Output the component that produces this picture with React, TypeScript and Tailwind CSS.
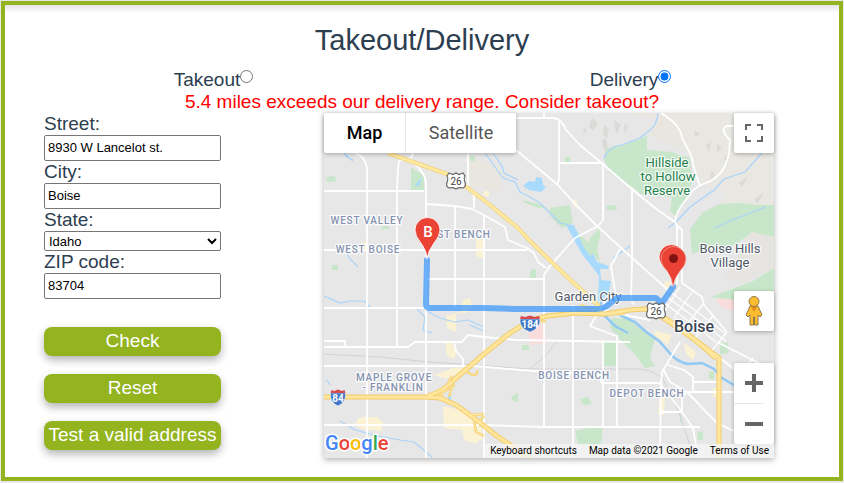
import { useState } from "react";

const font = "font-['Liberation_Sans',Arial,sans-serif]";
const roboto = "font-[Roboto,sans-serif]";

const minorRoads = [
  "M355 153 Q367 158 367 170 V458",
  "M324 191 H424",
  "M413 153 L411 158 L399 161 L398 168 L397 191 V346",
  "M410 160 Q426 172 426 184 V458",
  "M426 204 L455 206 L472 209 L484 215 L505 227 L508 240 L527 248 L534 253 L538 262 L546 268",
  "M455 206 V308",
  "M468 153 V187 L474 195 V208",
  "M484 215 V458",
  "M324 250 H527",
  "M427 279 H544",
  "M324 308 H430",
  "M324 341 H345 V347 H324",
  "M345 347 H408 L415 342 H462 L468 335 L484 337 L516 340 L630 342",
  "M324 366 H474 L520 370 L598 375 L602 383 H660 L662 382",
  "M454 342 L456 351 L463 359 V366",
  "M324 425 H484 L545 427 H700",
  "M544 427 V275 L550 266 L575 238 L598 226",
  "M573 305 V458",
  "M603 340 V427",
  "M617 335 V427",
  "M516 118 H553 Q561 118 566 130 L580 145 L604 165 L632 189 L655 208 L675 222 L677 226 V284",
  "M544 113 V118",
  "M559 120 V180 L557 185",
  "M559 163 H603",
  "M603 163 V220 L598 226",
  "M516 150 L557 184 L575 204 L597 226 L630 256 L668 290",
  "M677 225 L682 230 V283 L702 297 L704 305 L727 332",
  "M661 113 Q681 125 682 138 L691 155 L696 175 L700 186",
  "M675 222 Q676 210 689 196 Q692 189 703 184 Q718 180 725 166 L729 154 L730 140 Q719 129 727 126 H734",
  "M632 190 V265 L631 300 L634 304",
  "M611 266 L614 285 L617 300 M611 266 L620 249",
  "M600 310 L650 320 M606 300 L590 326 L616 336",
  "M680 342 L662 372 L661 383 L660 458",
  "M668 365 L684 370 L693 377 V392 M693 382 H718",
  "M687 392 H734",
  "M663 369 L670 382 L687 392 L717 423 L734 431",
  "M660 384 L680 409 L693 428 L698 458",
  "M660 412 H682 V397 L687 392",
  "M717 342 L753 360 L774 372",
  "M720 358 L734 369 M749 363 L753 358",
];

const downtown = [
  "M668 290 L725 333",
  "M666 296 L726 341",
  "M662 301 L716 342",
  "M680 287 L665 310",
  "M692 292 L674 318",
  "M703 304 L684 328",
  "M713 316 L694 339",
  "M727 332 L710 353",
];

const usHighways = ["M388 153 L410 161 L447 174 L460 182 L490 205 L518 228 L530 241 L565 275 L600 307"];
const freeways = [
  "M324 397 H425 L440 398 L456 405 L474 418 L497 436 L530 459",
  "M428 396 Q446 390 455 379 L470 366 L490 349 L510 333 Q530 319 548 316 L575 313 L605 314 L630 310 L644 309 L656 312 L668 320 L700 344 L716 358",
  "M660 316 L690 336 L719 358 V458",
];
const ramps = [
  "M435 397 L455 385 M440 398 L452 376 M464 370 Q478 380 477 370 M449 397 L452 386",
  "M470 415 L484 414 M474 420 L476 432 L484 436 M478 423 L484 416",
  "M580 305 L606 314 L625 314 M520 323 L546 321",
];

const greens = [
  "M620 146 L634 141 L647 136 V150 L672 152 L690 158 L692 181 L686 200 L675 216 L670 211 L672 197 L640 194 L634 188 L620 180 L610 172 L604 160 L606 149 L616 145 Z",
  "M690 229 L703 212 L720 204 L740 203 L758 205 L774 205 V237 L752 232 L735 245 L706 249 L692 254 Z",
  "M711 297 L753 281 L774 268 V300 L745 301 Z",
  "M411 167 L424 176 V190 H411 Z",
  "M326 177 L335 176 L336 181 L327 182 Z",
  "M332 265 H338 V270 H332 Z",
  "M382 226 H389 V229 H382 Z",
  "M470 156 H475 V161 H470 Z",
  "M565 157 H570 V162 H565 Z",
  "M606 206 L616 205 L617 210 L607 210 Z",
  "M550 208 L570 205 L573 223 L562 228 L550 216 Z",
  "M513 184 L523 200 L538 204 L548 209 L535 207 L524 202 Z",
  "M590 238 L600 228 L600 236 L597 250 L600 262 L586 248 Z",
  "M530 270 L536 269 V278 H530 Z",
  "M612 318 L630 319 L640 329 L655 338 L650 358 L655 366 L645 368 L635 354 L622 342 L610 327 Z",
  "M603 342 H616 V366 H603 Z",
  "M511 397 L518 393 V402 L513 401 Z",
  "M580 399 L588 397 L592 404 L584 405 Z",
  "M575 431 L588 428 L602 428 L602 440 L600 444 H578 Z",
  "M709 372 L714 371 V379 H709 Z",
  "M698 431 L703 432 V440 H697 Z",
  "M680 412 L682 418 L680 424 Z",
  "M720 343 L728 343 L729 353 L720 354 Z",
  "M522 345 H529 V350 H522 Z",
];

const yellows = [
  "M463 300 L470 298 L472 305 L468 312 L456 314 V332 L447 328 L446 316 L460 312 Z",
  "M476 238 L485 240 L483 259 L476 256 Z",
  "M434 375 L456 367 L467 369 L455 375 L446 379 Z",
  "M445 342 H451 L456 352 L454 359 L447 356 Z",
  "M358 418 L365 417 L378 417 L384 424 L381 431 L362 429 L355 425 Z",
  "M443 406 L468 412 L478 420 V444 L464 440 L462 430 L444 428 Z",
  "M470 427 H482 V440 L470 442 Z",
  "M484 190 L489 192 V197 L483 196 Z",
  "M572 199 L577 201 L578 208 L574 206 Z",
  "M361 243 L367 242 V250 L361 251 Z",
  "M660 395 L665 395 L664 415 L658 414 Z",
  "M684 343 L696 352 L693 360 L686 354 Z",
  "M655 331 L672 335 L668 345 L655 336 Z",
  "M713 388 H722 V397 H713 Z",
  "M665 281 L672 282 L668 290 L664 287 Z",
];

const streams = [
  "M485 153 L495 167 L503 178 L515 182 L520 192 L530 197 L540 203 L552 215 L560 223 L575 226",
  "M493 153 L502 166 L504 173 L518 180",
  "M344 153 L349 158 L353 161 M345 156 L353 160",
  "M604 158 Q608 147 622 145 L640 138 L650 130 Q657 125 658 113",
  "M762 153 L745 172 L724 179 L714 190 L690 207 L676 222 L668 228",
  "M715 228 L730 221 L745 215 L755 211 L766 207",
  "M339 245 L345 250 L350 259 L358 267",
  "M324 296 L340 303 L350 301 L364 301 L370 307",
  "M417 309 L425 317 L423 330 L432 333 M425 310 L440 318 L454 322 L468 320 L484 327",
  "M340 421 L355 430 L378 436 L400 440 L414 442 L432 457",
  "M327 380 L330 385",
  "M470 325 L486 332",
  "M613 258 L630 246",
];

const Shield = ({ x, y }: { x: number; y: number }) => (
  <g transform={`translate(${x} ${y})`}>
    <path
      d="M-7 -8 L-3 -6.500 L0 -8 L3 -6.500 L7 -8 L9 -5 Q7.500 -3 8.500 0 Q11 5 7 7 Q3 6 0 8 Q-3 6 -7 7 Q-11 5 -8.500 0 Q-7.500 -3 -9 -5 Z"
      fill="#fff"
      stroke="#666"
      strokeWidth="1.2"
    />
    <text y="3.500" fontSize="10" textAnchor="middle" fill="#444">26</text>
  </g>
);

const Interstate = ({ x, y, n, w }: { x: number; y: number; n: string; w: number }) => (
  <g transform={`translate(${x} ${y})`}>
    <path d={`M${-w} -4 H${w} Q${w + 1} 5 0 9 Q${-w - 1} 5 ${-w} -4 Z`} fill="#3e76c6" stroke="#fff" strokeWidth="0.5" />
    <path d={`M${-w} -4 L${-w + 1} -7 L${-w / 2} -6 L0 -7.500 L${w / 2} -6 L${w - 1} -7 L${w} -4 Z`} fill="#d8494b" />
    <text y="4.500" fontSize="10" fontWeight="700" textAnchor="middle" fill="#fff">{n}</text>
  </g>
);

function MapDrawing() {
  return (
    <svg className={`block h-full w-full ${roboto}`} viewBox="324 113 450 345" preserveAspectRatio="xMidYMid slice" role="img" aria-label="Map of Boise">
      <rect x="0" y="0" width="1200" height="800" fill="#e7e7e7" />
      <path d="M661 113 H774 V206 L740 203 L720 205 L725 190 L703 184 L696 175 L684 140 Z" fill="#e9e7e1" />
      <path d="M620 113 H661 L680 132 L684 150 L650 135 L657 118 Z M475 158 L500 170 L501 190 L470 187 V165 Z" fill="#e9e6df" />
      <path d="M742 213 L774 206 V268 L740 284 L725 275 L745 245 Z" fill="#e5e4e1" />
      <g fill="#d9d8d4" opacity="0.8">
        <path d="M592 118 l6 5 -5 8 -4 -5z M604 125 l5 4 -2 9 -4 -3z M614 120 l7 5 -5 9z M602 140 l4 -2 2 10 -4 3z M624 124 l4 2 -3 8z M584 128 l3 2 -4 4z" />
        <path d="M706 145 l5 -3 -2 11z M717 144 l5 5 -5 3z M711 171 l4 3 -5 9z M724 158 l4 -4 -2 8z M739 183 l9 -7 -6 11z M754 200 l10 -8 -6 11z M694 130 l6 4 -5 3z" />
      </g>
      <path d="M528 328 L543 324 L544 334 L548 343 L530 345 Z M716 300 L733 292 L734 311 L722 307 Z" fill="#f9dcdc" />
      {greens.map((d) => <path key={d} d={d} fill="#c8e6ca" />)}
      {yellows.map((d) => <path key={d} d={d} fill="#fbf1d3" />)}
      <g fill="none" stroke="#d2d2d6" strokeWidth="1">
        <path d="M324 354 L380 357 L430 362 L530 369 H640 Q655 371 663 379 L678 410 L690 445" />
        <path d="M530 369 L546 355 L558 340" />
      </g>
      <g fill="none" stroke="#a9d4fa" strokeWidth="1.200">
        {streams.map((d) => <path key={d} d={d} />)}
      </g>
      <g fill="#a8dafd">
        <path d="M523 186 L529 181 L535 182 L536 177 L542 178 L543 185 L546 187 L541 192 L529 190 Z" />
        <path d="M566 225 L574 226 L582 240 L592 251 L597 262 L609 266 L608 269 L600 269 L601 280 L611 281 L609 292 L601 302 L598 300 L599 276 L593 268 L582 254 Z" />
        <path d="M447 397 L451 396 V401 Z M415 185 L422 177 L419 186 Z" />
      </g>
      <path d="M578 234 L586 240 L595 252 L590 256 L583 246 Z" fill="#c8e6ca" />
      <path d="M601 302 L605 316 L615 326 L628 333 M620 315 L635 322 L645 331 L659 341 L667 350 Q676 362 688 364 L702 363 L714 369 L722 378 L734 385" fill="none" stroke="#91c9f5" strokeWidth="2.500" />
      <g fill="none" stroke="#fff" strokeWidth="1.800" strokeLinejoin="round">
        {minorRoads.map((d) => <path key={d} d={d} />)}
      </g>
      <g fill="none" stroke="#fff" strokeWidth="1.300">
        {downtown.map((d) => <path key={d} d={d} />)}
      </g>
      <g fill="none" strokeLinejoin="round">
        {ramps.map((d) => <path key={d} d={d} stroke="#f4cf6e" strokeWidth="2.500" />)}
        {usHighways.map((d) => <path key={d} d={d} stroke="#f2cf73" strokeWidth="4" />)}
        {usHighways.map((d) => <path key={d} d={d} stroke="#ffeaa2" strokeWidth="2.500" />)}
        {freeways.map((d) => <path key={d} d={d} stroke="#f3ca66" strokeWidth="5" />)}
        {freeways.map((d) => <path key={d} d={d} stroke="#ffe69b" strokeWidth="3.200" />)}
        {ramps.map((d) => <path key={d} d={d} stroke="#ffe9a8" strokeWidth="1" />)}
      </g>

      <g stroke="#fff" strokeWidth="2.500" strokeOpacity="0.85" strokeLinejoin="round" paintOrder="stroke" textAnchor="middle">
        <g fill="#8592b0" fontSize="10" fontWeight="500" letterSpacing="0.8">
          <text x="367" y="224">WEST VALLEY</text>
          <text x="368" y="253">WEST BOISE</text>
          <text x="464" y="238">ST BENCH</text>
          <text x="394" y="381">MAPLE GROVE</text>
          <text x="393" y="391">- FRANKLIN</text>
          <text x="574" y="379">BOISE BENCH</text>
          <text x="647" y="397">DEPOT BENCH</text>
        </g>
        <g fill="#24804b" fontSize="13">
          <text x="667" y="167">Hillside</text>
          <text x="668" y="181">to Hollow</text>
          <text x="667" y="195">Reserve</text>
        </g>
        <g fill="#505968" fontSize="13">
          <text x="730" y="253">Boise Hills</text>
          <text x="730" y="267">Village</text>
          <text x="588" y="301">Garden City</text>
        </g>
        <text x="694" y="332" fill="#3c4453" fontSize="16" fontWeight="500">Boise</text>
      </g>

      <path
        d="M427 260 L426 304 Q426 308 430 308 H484 L515 309 H596 Q603 309 608 305 L617 298 H656 L662 303 L673 287"
        fill="none"
        stroke="#3d98fb"
        strokeOpacity="0.75"
        strokeWidth="6"
        strokeLinecap="round"
        strokeLinejoin="round"
      />
      <Shield x={456} y={181} />
      <Shield x={656} y={311} />
      <Interstate x={530} y={323} n="184" w={10} />
      <Interstate x={338} y={397} n="84" w={7.5} />
      <path d="M427 259 Q427 251 421 243 Q415 236 415 230 A12.500 12.500 0 0 1 440 230 Q440 236 434 243 Q428 251 427 259 Z" fill="#ea4335" stroke="#fff" strokeWidth="0.800" />
      <text x="428" y="237" fontSize="15" fontWeight="500" textAnchor="middle" fill="#fff">B</text>
      <path d="M672 286 Q672 278 666 270 Q659 263 659 257 A12.500 12.500 0 0 1 684 257 Z" fill="#ea4335" stroke="#fff" strokeWidth="0.800" />
      <path d="M673 287 Q673 279 667 271 Q661 265 661 259 A12.500 12.500 0 0 1 686 259 Q686 265 680 271 Q674 279 673 287 Z" fill="#ea4335" stroke="#f9c6c1" strokeWidth="0.500" />
      <circle cx="673.500" cy="258.500" r="4.500" fill="#811411" />
    </svg>
  );
}

const Pegman = () => (
  <svg width="18" height="32" viewBox="0 0 18 32" aria-hidden="true">
    <path d="M5 11 Q9 9 13 11 L17 20 L15 22 L13 20 V30 H9.500 V22 H8.500 V30 H5 V20 L3 22 L1 20 Z" fill="#fbbc2f" stroke="#8f7a50" strokeWidth="1" strokeLinejoin="round" />
    <path d="M5.500 11 H12.500 L9 17 Z" fill="#e58a1d" />
    <circle cx="9" cy="6.500" r="5" fill="#fbbc2f" stroke="#8f7a50" strokeWidth="1" />
  </svg>
);

const card = "bg-white rounded-xs shadow-[0_1px_4px_rgba(0,0,0,0.3)]";
const iconButton = `flex size-10 items-center justify-center ${card}`;
const field = "h-[26px] w-full rounded-xs border border-[#767676] bg-white px-[3px] pb-px text-[13px] text-black";
const action = "h-[29px] w-full rounded-lg bg-[#93b31f] pb-0.5 text-[19px] leading-[22px] whitespace-nowrap text-white shadow-[0_4px_8px_rgba(0,0,0,0.3)]";

export default function App() {
  const [mode, setMode] = useState("delivery");
  const [street, setStreet] = useState("8930 W Lancelot st.");
  const [city, setCity] = useState("Boise");
  const [zip, setZip] = useState("83704");

  return (
    <div className={`bg-[#e8e8e8] px-px pt-px pb-0.5 text-[19px] leading-[22px] text-[#2c3e50] ${font}`}>
      <main className="border-4 border-[#93b31f] bg-white pb-[19px]">
        <div className="h-2 bg-linear-to-b from-[#e4e4e4] to-white" />
        <h1 className="pt-[10px] pb-3 text-center text-[29px] leading-[34px]">Takeout/Delivery</h1>
        <div className="grid grid-cols-2">
          <label className="flex justify-center">
            Takeout
            <input type="radio" name="mode" className="mt-px size-[13px]" checked={mode === "takeout"} onChange={() => setMode("takeout")} />
          </label>
          <label className="flex justify-center">
            Delivery
            <input type="radio" name="mode" className="mt-px size-[13px]" checked={mode === "delivery"} onChange={() => setMode("delivery")} />
          </label>
        </div>
        <p className="text-center text-[#ff0000]">5.4 miles exceeds our delivery range. Consider takeout?</p>
        <div className="flex items-start gap-[103px] pr-[65px] pl-[39px]">
          <form className="w-[177px] shrink-0" onSubmit={(e) => e.preventDefault()}>
            <label htmlFor="street" className="block">Street:</label>
            <input id="street" className={`block ${field}`} value={street} onChange={(e) => setStreet(e.target.value)} />
            <label htmlFor="city" className="block">City:</label>
            <input id="city" className={`block ${field}`} value={city} onChange={(e) => setCity(e.target.value)} />
            <label htmlFor="state" className="block">State:</label>
            <select id="state" className="block h-5 w-full rounded-xs border border-[#767676] bg-white text-[13px] leading-4 text-black">
              <option>Idaho</option>
            </select>
            <label htmlFor="zip" className="block">ZIP code:</label>
            <input id="zip" className={`block ${field}`} value={zip} onChange={(e) => setZip(e.target.value)} />
            <div className="mt-7 flex flex-col gap-[18px]">
              <button type="submit" className={action}>Check</button>
              <button type="reset" className={action}>Reset</button>
              <button type="button" className={action}>Test a valid address</button>
            </div>
          </form>
          <section className={`relative h-[345px] min-w-0 flex-1 shadow-[0_2px_6px_rgba(0,0,0,0.3)] ${roboto}`}>
            <MapDrawing />
            <div className={`absolute top-0 left-0 flex h-10 text-[18px] ${card}`}>
              <button className="w-[81px] font-medium text-black">Map</button>
              <button className="w-[111px] border-l border-[#e6e6e6] text-[#565656]">Satellite</button>
            </div>
            <button aria-label="Toggle fullscreen view" className={`absolute top-0 right-0 ${iconButton}`}>
              <svg width="18" height="18" viewBox="0 0 18 18" fill="none" stroke="#666" strokeWidth="2">
                <path d="M1 6 V1 H6 M12 1 H17 V6 M17 12 V17 H12 M6 17 H1 V12" />
              </svg>
            </button>
            <button aria-label="Street View" className={`absolute right-0 bottom-[127px] ${iconButton}`}>
              <Pegman />
            </button>
            <div className={`absolute right-0 bottom-[14px] flex w-10 flex-col ${card}`}>
              <button aria-label="Zoom in" className="flex h-10 items-center justify-center">
                <svg width="18" height="18" viewBox="0 0 18 18" fill="none" stroke="#666" strokeWidth="4"><path d="M0 9 H18 M9 0 V18" /></svg>
              </button>
              <hr className="mr-2.5 border-[#e6e6e6]" />
              <button aria-label="Zoom out" className="flex h-10 items-center justify-center">
                <svg width="18" height="18" viewBox="0 0 18 18" fill="none" stroke="#666" strokeWidth="4"><path d="M0 9 H18" /></svg>
              </button>
            </div>
            <svg className="absolute bottom-0 left-0" width="68" height="28" viewBox="0 0 68 28" role="img" aria-label="Google">
              <text x="1" y="20" fontSize="20" fontWeight="500" stroke="#fff" strokeWidth="3" strokeLinejoin="round" paintOrder="stroke">
                <tspan fill="#4285f4">G</tspan><tspan fill="#ea4335">o</tspan><tspan fill="#fbbc04">o</tspan><tspan fill="#4285f4">g</tspan><tspan fill="#34a853">l</tspan><tspan fill="#ea4335">e</tspan>
              </text>
            </svg>
            <div className="absolute right-0 bottom-0 flex h-[14px] items-center gap-3 bg-[#f5f5f5]/80 px-[5px] text-[10px] leading-[14px] whitespace-nowrap text-black">
              <button>Keyboard shortcuts</button>
              <span>Map data ©2021 Google</span>
              <a href="#terms">Terms of Use</a>
            </div>
          </section>
        </div>
      </main>
    </div>
  );
}
